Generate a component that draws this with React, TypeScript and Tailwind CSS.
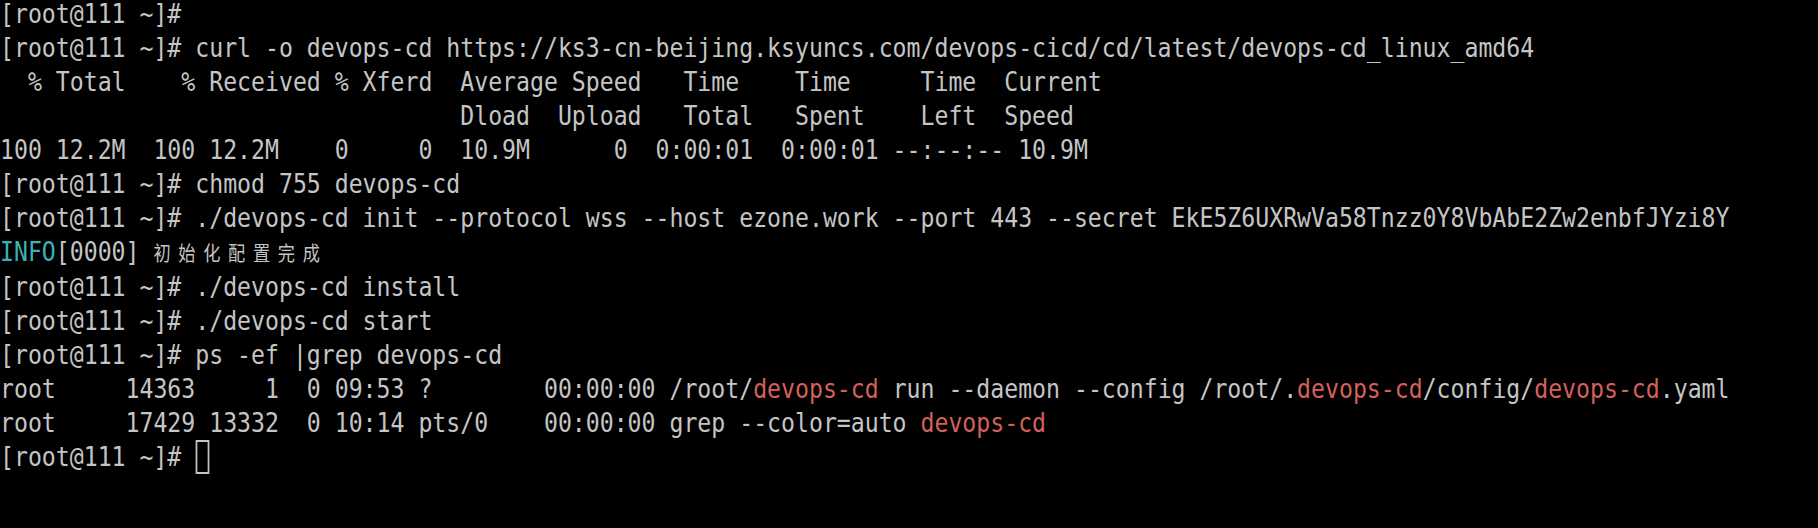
import React from 'react'

type Seg = { t: string; c?: 'red' | 'cyan' | 'cjk' }

const P = '[root@111 ~]# '

const lines: Seg[][] = [
  [{ t: '[root@111 ~]#' }],
  [{ t: P + 'curl -o devops-cd https://ks3-cn-beijing.ksyuncs.com/devops-cicd/cd/latest/devops-cd_linux_amd64' }],
  [{ t: '  % Total    % Received % Xferd  Average Speed   Time    Time     Time  Current' }],
  [{ t: '                                 Dload  Upload   Total   Spent    Left  Speed' }],
  [{ t: '100 12.2M  100 12.2M    0     0  10.9M      0  0:00:01  0:00:01 --:--:-- 10.9M' }],
  [{ t: P + 'chmod 755 devops-cd' }],
  [{ t: P + './devops-cd init --protocol wss --host ezone.work --port 443 --secret EkE5Z6UXRwVa58Tnzz0Y8VbAbE2Zw2enbfJYzi8Y' }],
  [{ t: 'INFO', c: 'cyan' }, { t: '[0000] ' }, { t: '初始化配置完成', c: 'cjk' }],
  [{ t: P + './devops-cd install' }],
  [{ t: P + './devops-cd start' }],
  [{ t: P + 'ps -ef |grep devops-cd' }],
  [
    { t: 'root     14363     1  0 09:53 ?        00:00:00 /root/' },
    { t: 'devops-cd', c: 'red' },
    { t: ' run --daemon --config /root/.' },
    { t: 'devops-cd', c: 'red' },
    { t: '/config/' },
    { t: 'devops-cd', c: 'red' },
    { t: '.yaml' },
  ],
  [
    { t: 'root     17429 13332  0 10:14 pts/0    00:00:00 grep --color=auto ' },
    { t: 'devops-cd', c: 'red' },
  ],
]

function Segment({ seg }: { seg: Seg }) {
  if (seg.c === 'red') return <span className="text-[#d4605a]">{seg.t}</span>
  if (seg.c === 'cyan') return <span className="text-[#3bb3b5]">{seg.t}</span>
  if (seg.c === 'cjk')
    return (
      <span className="text-[20px] tracking-[9px] [font-family:'Noto_Sans_CJK_SC',sans-serif]">
        {seg.t}
      </span>
    )
  return <span>{seg.t}</span>
}

export default function App() {
  return (
    <div className="h-[528px] w-full overflow-hidden bg-black">
      {/* terminal body, condensed horizontally like the source font */}
      <div className="-mt-[3px] origin-top-left scale-x-[0.858] text-[27px] leading-[34px] text-[#c5c5c5] [font-family:'DejaVu_Sans_Mono','Noto_Sans_CJK_SC',monospace]">
        {lines.map((line, i) => (
          <div key={i} className="whitespace-pre">
            {line.map((seg, j) => (
              <Segment key={j} seg={seg} />
            ))}
          </div>
        ))}
        <div className="flex items-center whitespace-pre">
          <span>{P}</span>
          <span className="h-[34px] w-[16px] border-2 border-[#c5c5c5]" />
        </div>
      </div>
    </div>
  )
}
